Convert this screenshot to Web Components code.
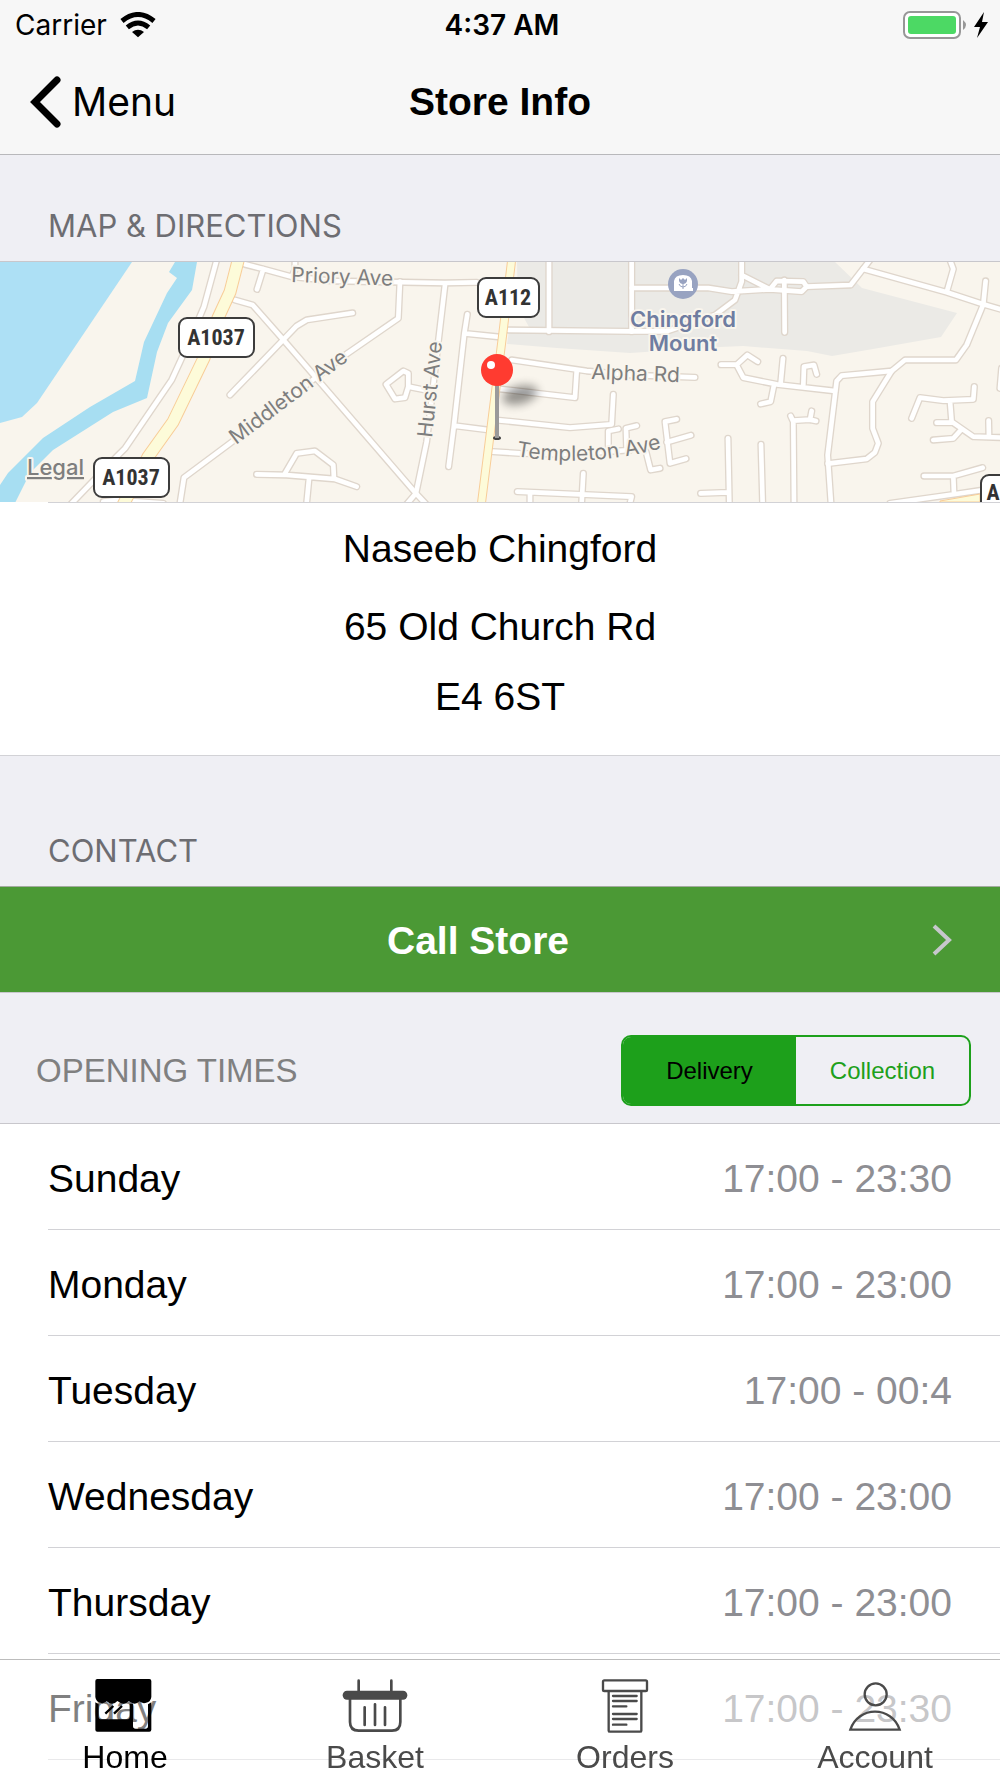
<!DOCTYPE html>
<html lang="en">
<head>
<meta charset="utf-8">
<meta name="viewport" content="width=device-width, initial-scale=1">
<title>Store Info</title>
<style>
    body {
        margin: 0;
        background: #fff;
        color: #000;
        font-family: "Liberation Sans", Arial, sans-serif;
        font-size: 39px;
    }
</style>
</head>
<body>

<status-bar carrier="Carrier" time="4:37 AM"></status-bar>
<nav-bar back="Menu">Store Info</nav-bar>
<main>
    <section-header>MAP &amp; DIRECTIONS</section-header>
    <store-map></store-map>
    <store-address>
        <span slot="name">Naseeb Chingford</span>
        <span slot="street">65 Old Church Rd</span>
        <span slot="postcode">E4 6ST</span>
    </store-address>
    <section-header tall>CONTACT</section-header>
    <call-button>Call Store</call-button>
    <opening-times></opening-times>
</main>
<tab-bar></tab-bar>

<script>
// Status bar: carrier, clock and battery
class StatusBar extends HTMLElement {
    constructor() {
        super();
        this.attachShadow({ mode: 'open' });
        this.shadowRoot.innerHTML = `
            <style>
                :host {
                    display: grid;
                    grid-template-columns: 1fr auto 1fr;
                    align-items: center;
                    height: 50px;
                    padding: 0 11px 0 15px;
                    background: #f7f7f7;
                    font: 28px/34px Inter, sans-serif;
                }
                .left, .right { display: flex; align-items: center; gap: 13px; }
                .right { justify-content: flex-end; gap: 6px; }
                .time { font-weight: 600; }
                svg { display: block; }
            </style>
            <div class="left">
                <span>${this.getAttribute('carrier')}</span>
                <svg width="36" height="26" viewBox="0 0 108 78" fill="none" stroke="#000" stroke-width="15">
                    <path d="M6 27Q54 -12 102 27"/>
                    <path d="M22 46Q54 20 86 46"/>
                    <path d="M54 76L36 60Q54 46 72 60Z" fill="#000" stroke="none"/>
                </svg>
            </div>
            <span class="time">${this.getAttribute('time')}</span>
            <div class="right">
                <svg width="64" height="28" viewBox="0 0 64 28">
                    <rect x="1" y="1" width="56" height="26" rx="6" fill="#fff" stroke="#979797" stroke-width="2"/>
                    <rect x="5" y="5" width="48" height="18" rx="3" fill="#4cd964"/>
                    <path d="M60 9Q66 14 60 19Z" fill="#979797"/>
                </svg>
                <svg width="16" height="26" viewBox="0 0 16 26"><path d="M11 0L1 15H7L4 26L15 10H9Z"/></svg>
            </div>
        `;
    }
}

// Navigation bar with a back link, the title is slotted
class NavBar extends HTMLElement {
    constructor() {
        super();
        this.attachShadow({ mode: 'open' });
        this.shadowRoot.innerHTML = `
            <style>
                :host {
                    display: grid;
                    grid-template-columns: 1fr auto 1fr;
                    align-items: center;
                    height: 104px;
                    padding: 0 30px;
                    background: #f7f7f7;
                    border-bottom: 1px solid #b8b8bb;
                }
                a {
                    display: flex;
                    align-items: center;
                    gap: 10px;
                    color: #000;
                    font: 39px/46px Inter, sans-serif;
                    text-decoration: none;
                }
                h1 { margin: 0; font-size: 39px; line-height: 44px; }
            </style>
            <a href="#menu">
                <svg width="32" height="52" viewBox="0 0 32 52" fill="none" stroke="#000" stroke-width="7" stroke-linecap="round">
                    <path d="M27 4L5 26L27 48"/>
                </svg>
                <span>${this.getAttribute('back')}</span>
            </a>
            <h1><slot></slot></h1>
        `;
    }
}

class SectionHeader extends HTMLElement {
    constructor() {
        super();
        this.attachShadow({ mode: 'open' });
        this.shadowRoot.innerHTML = `
            <style>
                :host {
                    display: block;
                    padding: 53px 48px 17px;
                    background: #efeff4;
                    border-bottom: 1px solid #c8c7cc;
                }
                :host([tall]) { padding-top: 77px; border-bottom-color: #a3ab9f; }
                h2 {
                    margin: 0;
                    color: #6d6d72;
                    font: 31px/36px Inter, sans-serif;
                }
            </style>
            <h2><slot></slot></h2>
        `;
    }
}

// Map of the streets round the store
class StoreMap extends HTMLElement {
    constructor() {
        super();
        this.attachShadow({ mode: 'open' });
        this.shadowRoot.innerHTML = `
            <style>
                :host { display: block; background: #f9f5ed; }
                svg { display: block; width: 100%; height: 240px; }
                text { font-family: Inter, sans-serif; font-size: 21px; fill: #7e7e7e; }
                .halo { stroke: #f9f5ed; stroke-width: 4px; stroke-linejoin: round; paint-order: stroke; }
                .place { font-size: 22px; font-weight: 600; fill: #6f7da1; text-anchor: middle; }
                .legal { font-size: 22px; font-weight: 500; text-decoration: underline; }
                .shield rect { fill: #fff; stroke: #3c3c3c; stroke-width: 2px; }
                .shield text {
                    font: bold 22px "Roboto Condensed", "Liberation Sans Narrow", Roboto, sans-serif;
                    fill: #333;
                    text-anchor: middle;
                }
            </style>
            <svg viewBox="0 0 1000 240" preserveAspectRatio="xMidYMid slice" role="img" aria-label="Map">
                <defs>
                    <filter id="soft" x="-50%" y="-50%" width="200%" height="200%"><feGaussianBlur stdDeviation="5"/></filter>
                    <g id="roads" fill="none" stroke-linejoin="round" stroke-linecap="round">
                        <g transform="translate(0 -7) scale(.3333)">
                            <path d="M650 15L612 155L595 195L545 310L515 375L375 580L350 605L215 745"/>
                            <path d="M735 28L790 42L875 65M790 42L771 103M885 15V45L875 65M875 65L1000 78L1335 84L1430 82"/>
                            <path d="M705 135L758 150L848 252L1245 712L1290 760"/>
                            <path d="M690 420L890 213L920 195L1058 174"/>
                            <path d="M540 745L552 668L690 565L1040 297L1195 190L1200 80"/>
                            <path d="M770 658L860 660L1005 672L1070 695M855 655L890 595L945 588L1000 630L1002 670M927 672L920 745"/>
                            <path d="M310 740L350 735L490 745"/>
                        </g>
                        <g transform="translate(330 -7) scale(.3333)">
                            <path d="M345 90L325 260L290 560L258 715L228 750"/>
                            <path d="M412 178L403 235L372 510L356 635M403 235L510 246M372 512L475 525"/>
                            <path d="M285 405L235 395V355L220 348L168 388L195 432L225 428L235 395"/>
                            <path d="M657 15V230M905 15V230"/>
                            <path d="M545 315L770 348L900 360L1095 367M740 350L735 428L510 402"/>
                            <path d="M508 496L720 518L845 508L850 418"/>
                            <path d="M488 590L570 595L720 598L900 585M835 580V528L865 522M890 580L888 520L920 512M948 590L962 645L990 640"/>
                            <path d="M562 710L905 725L900 745M760 655L755 745M600 712V745"/>
                        </g>
                        <g transform="translate(660 -7) scale(.3333)">
                            <path d="M-455 225L-90 229H20L165 180L225 135L245 80V15M-85 99H145L215 110L330 103L350 78L430 80L440 95L425 110L330 103L245 60"/>
                            <path d="M373 75L374 232M440 95L572 90L630 15"/>
                            <path d="M610 42L860 112L970 148L1030 165M870 15L880 42L860 112"/>
                            <path d="M977 78L970 148L920 270L888 315H735L695 348L545 362L530 378L503 600L513 745"/>
                            <path d="M695 348L638 440V520L655 565L645 592L620 612L503 626"/>
                            <path d="M183 329H230L262 300L293 320M230 330L250 368L350 388L525 408M369 310L362 385M342 390L332 440L302 447M430 390L432 335L462 330L470 358"/>
                            <path d="M392 483L400 500L402 745M400 497L450 494L468 498M455 468L450 495"/>
                            <path d="M204 550L208 745M122 715L205 712M303 568L308 745"/>
                            <path d="M50 493L15 500L30 625L78 611M20 562L93 541"/>
                            <path d="M755 490L780 428L850 437L940 433L943 395M870 437L875 500L940 545L1030 548M830 503H875M820 555L880 550L900 528M986 497L987 545"/>
                            <path d="M792 663H880L968 638M880 663L882 715M690 745L882 718L970 705M1025 340L1020 400"/>
                        </g>
                    </g>
                    <g id="main" fill="none">
                        <path d="M239 -5L230 30L218 56L204 96L173 160L148 195L122 245" stroke-width="11"/>
                        <path d="M512 -5L503 70L481 245" stroke-width="7"/>
                    </g>
                </defs>

                <rect width="1000" height="240" fill="#f9f5ed"/>
                <path fill="#ade0f5" d="M0 0H132L37 141L22 155L0 161Z"/>
                <path fill="#a7def2" d="M175 0H197L192 28L168 61L157 90L147 136L113 150L53 188L30 211L15 241H0V223L8 211L43 176L90 145L135 119L144 80L167 31L177 16L169 10Z"/>
                <path fill="#ebeae6" d="M517 0H835L862 26L957 51L941 75L873 87L832 94L807 89L743 84L720 85L630 91L557 86L507 82L509 69L529 65L518 45Z"/>

                <use href="#roads" stroke="#dfd6cc" stroke-width="22"/>
                <use href="#roads" stroke="#fff" stroke-width="14"/>
                <g stroke="#f8cd98" fill="none">
                    <path d="M239 -5L230 30L218 56L204 96L173 160L148 195L122 245" stroke-width="13"/>
                    <path d="M512 -5L503 70L481 245" stroke-width="9"/>
                </g>
                <use href="#main" stroke="#fdfbd9"/>
                <path d="M940 239L980 232V240H940Z" fill="#fdfbd9" stroke="#f8cd98"/>

                <text class="halo" transform="translate(291 20) rotate(2)">Priory Ave</text>
                <text class="halo" transform="translate(236 183) rotate(-37)">Middleton Ave</text>
                <text class="halo" transform="translate(432 176) rotate(-84)">Hurst Ave</text>
                <text class="halo" transform="translate(591 117) rotate(2)">Alpha Rd</text>
                <path id="templeton" d="M516 194Q594 208 680 181" fill="none"/>
                <text class="halo"><textPath href="#templeton">Templeton Ave</textPath></text>

                <circle cx="683" cy="22" r="15" fill="#98a3c1"/>
                <path fill="#fff" d="M674 29V19Q675 13 683 13Q691 13 692 19V26H693V29Z"/>
                <path d="M683 27V21M679 22Q680 25 683 25Q686 25 687 22" fill="none" stroke="#98a3c1" stroke-width="1"/>
                <path d="M679 16L681 18L683 16L685 18L687 16V19Q686 22 683 22Q680 22 679 19Z" fill="#98a3c1"/>
                <text class="halo place" x="683" y="65">Chingford</text>
                <text class="halo place" x="683" y="89">Mount</text>

                <g class="shield">
                    <rect x="179" y="56" width="75" height="39" rx="8"/><text x="216" y="83">A1037</text>
                    <rect x="94" y="196" width="75" height="39" rx="8"/><text x="131" y="223">A1037</text>
                    <rect x="478" y="16" width="61" height="39" rx="8"/><text x="508" y="43">A112</text>
                    <rect x="981" y="213" width="75" height="39" rx="8"/><text x="993" y="238">A</text>
                </g>

                <ellipse cx="520" cy="133" rx="18" ry="9" fill="#000" opacity=".4" filter="url(#soft)" transform="rotate(-15 520 133)"/>
                <ellipse cx="497" cy="176" rx="4" ry="2" fill="#444"/>
                <path d="M497 120V176" stroke="#9a9a9a" stroke-width="4"/>
                <circle cx="497" cy="108" r="16" fill="#ff3b30"/>
                <circle cx="491" cy="103" r="4" fill="#fff"/>

                <a href="#legal"><text class="halo legal" x="27" y="213">Legal</text></a>
            </svg>
        `;
    }
}

class StoreAddress extends HTMLElement {
    constructor() {
        super();
        this.attachShadow({ mode: 'open' });
        this.shadowRoot.innerHTML = `
            <style>
                :host {
                    display: block;
                    border-bottom: 1px solid #d2d2d6;
                    line-height: 44px;
                    text-align: center;
                }
                hr { margin: 0 0 0 48px; border: 0; border-top: 1px solid #d2d2d6; }
                address { padding: 24px 48px 36px; font-style: normal; }
                div { margin-bottom: 26px; }
                div:first-child { margin-bottom: 34px; }
                div:last-child { margin-bottom: 0; }
            </style>
            <hr>
            <address>
                <div><slot name="name"></slot></div>
                <div><slot name="street"></slot></div>
                <div><slot name="postcode"></slot></div>
            </address>
        `;
    }
}

class CallButton extends HTMLElement {
    constructor() {
        super();
        this.attachShadow({ mode: 'open' });
        this.shadowRoot.innerHTML = `
            <style>
                :host { display: block; border-bottom: 1px solid #c8c7cc; }
                button {
                    display: flex;
                    align-items: center;
                    width: 100%;
                    height: 105px;
                    padding: 0 48px 0 0;
                    border: 0;
                    background: #4b9935;
                    color: #fff;
                    font: bold 39px/44px "Liberation Sans", Arial, sans-serif;
                }
                span { flex: 1; padding: 2px 0 0 24px; }
            </style>
            <button type="button">
                <span><slot></slot></span>
                <svg width="20" height="32" viewBox="0 0 20 32" fill="none" stroke="#c7c7cc" stroke-width="4"><path d="M2 2L17 16L2 30"/></svg>
            </button>
        `;
    }
}

// Opening times with a switch between delivery and collection
class OpeningTimes extends HTMLElement {
    constructor() {
        super();
        this.mode = 'Delivery';
        this.times = [
            ['Sunday', '17:00 - 23:30'],
            ['Monday', '17:00 - 23:00'],
            ['Tuesday', '17:00 - 00:4'],
            ['Wednesday', '17:00 - 23:00'],
            ['Thursday', '17:00 - 23:00'],
            ['Friday', '17:00 - 23:30']
        ];
        this.attachShadow({ mode: 'open' });
        this.render();
    }

    render() {
        this.shadowRoot.innerHTML = `
            <style>
                :host { display: block; }
                header {
                    display: flex;
                    justify-content: space-between;
                    align-items: center;
                    padding: 42px 29px 17px 36px;
                    background: #efeff4;
                    border-bottom: 1px solid #c8c7cc;
                }
                h2 { margin: 0; color: #808080; font-size: 33px; font-weight: normal; line-height: 38px; }
                .switch {
                    display: grid;
                    grid-template-columns: 1fr 1fr;
                    box-sizing: border-box;
                    width: 350px;
                    height: 71px;
                    border: 2px solid #1da01b;
                    border-radius: 10px;
                    overflow: hidden;
                }
                button {
                    padding: 0;
                    border: 0;
                    background: none;
                    color: #1da01b;
                    font: 24px/30px "Liberation Sans", Arial, sans-serif;
                }
                button[aria-pressed="true"] { background: #1da01b; color: #000; }
                table { width: 100%; padding-left: 48px; border-spacing: 0; }
                th, td {
                    box-sizing: border-box;
                    height: 106px;
                    padding: 5px 0 0;
                    border-bottom: 1px solid #d2d2d6;
                    font-weight: normal;
                    line-height: 44px;
                    text-align: left;
                }
                td { padding-right: 48px; color: #8e8e93; text-align: right; }
            </style>
            <header>
                <h2>OPENING TIMES</h2>
                <div class="switch">
                    ${['Delivery', 'Collection'].map(m => `<button type="button" aria-pressed="${m === this.mode}">${m}</button>`).join('')}
                </div>
            </header>
            <table>
                ${this.times.map(([day, hours]) => `<tr><th scope="row">${day}</th><td>${hours}</td></tr>`).join('')}
            </table>
        `;

        this.shadowRoot.querySelectorAll('button').forEach(button => {
            button.addEventListener('click', () => {
                this.mode = button.textContent;
                this.render();
            });
        });
    }
}

const tabIcons = {
    Home: `<path fill="currentColor" d="M22 6H178Q184 6 184 12V60Q182 76 166 78Q156 80 148 73Q138 84 126 78L116 72Q106 84 92 78L82 72Q72 84 58 78L50 73Q42 80 34 78Q18 76 16 60V12Q16 6 22 6Z"/>
        <path fill="currentColor" fill-rule="evenodd" d="M16 76L26 82V119Q26 127 34 127H111Q119 127 119 119V80H129V147Q129 155 137 155H166Q174 155 174 147V82L184 76V158Q184 164 178 164H22Q16 164 16 158Z"/>
        <path fill="none" stroke="currentColor" stroke-width="7" d="M46 110L70 87M72 110L96 87"/>`,
    Basket: `<g fill="none" stroke="currentColor" stroke-width="8" stroke-linecap="round">
        <path d="M56 11V45M154 11V45M30 60V135Q30 161 56 161H156Q181 161 181 135V60M74 91V144M105 82V144M135 91V144"/></g>
        <rect x="8" y="41" width="194" height="27" rx="13" fill="currentColor"/>`,
    Orders: `<g fill="none" stroke="currentColor" stroke-width="7" stroke-linecap="round">
        <rect x="39" y="10" width="132" height="32" rx="4"/><path d="M56 43V161Q56 164 60 164H150Q154 164 154 161V43"/>
        <path d="M69 57H140M69 72H140M69 88H109M69 111H140M69 126H140M69 143H109"/></g>`,
    Account: `<g fill="none" stroke="currentColor" stroke-width="7">
        <circle cx="107" cy="52" r="33"/><path d="M31 158C54 86 156 86 179 158Z"/></g>`
};

// Tab bar stays over the end of the list, which shows through it
class TabBar extends HTMLElement {
    constructor() {
        super();
        this.attachShadow({ mode: 'open' });
        this.shadowRoot.innerHTML = `
            <style>
                :host {
                    position: fixed;
                    right: 0;
                    bottom: 0;
                    left: 0;
                    display: block;
                    background: rgba(255, 255, 255, .5);
                    border-top: 1px solid #bcbcbc;
                }
                nav { display: grid; grid-template-columns: repeat(4, 1fr); padding: 17px 0 3px; }
                a {
                    display: flex;
                    flex-direction: column;
                    align-items: center;
                    gap: 6px;
                    color: #4a4a4a;
                    font-size: 32px;
                    line-height: 36px;
                    text-decoration: none;
                }
                a[aria-current] { color: #000; }
            </style>
            <nav>
                ${Object.keys(tabIcons).map(name => `
                    <a href="#${name.toLowerCase()}" ${name === 'Home' ? 'aria-current="page"' : ''}>
                        <svg width="70" height="56" viewBox="0 0 210 168">${tabIcons[name]}</svg>
                        <span>${name}</span>
                    </a>
                `).join('')}
            </nav>
        `;
    }
}

// Register custom elements
customElements.define('status-bar', StatusBar);
customElements.define('nav-bar', NavBar);
customElements.define('section-header', SectionHeader);
customElements.define('store-map', StoreMap);
customElements.define('store-address', StoreAddress);
customElements.define('call-button', CallButton);
customElements.define('opening-times', OpeningTimes);
customElements.define('tab-bar', TabBar);
</script>
</body>
</html>
